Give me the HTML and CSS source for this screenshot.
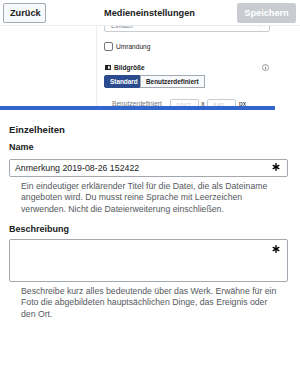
FILE: index.html
```html
<!DOCTYPE html>
<html lang="de">
<head>
    <meta charset="UTF-8">
    <meta name="viewport" content="width=device-width, initial-scale=1.0">
    <title>Medieneinstellungen</title>
    <link rel="stylesheet" href="styles.css">
</head>
<body>

<header class="topbar">
    <button class="btn back">Zurück</button>
    <div class="title">Medieneinstellungen</div>
    <button class="btn save" disabled>Speichern</button>
</header>

<section class="behind">
    <div class="side"></div>
    <div class="settings">
        <div class="dropdown">
            <span>Einfach</span>
            <svg class="caret" width="5" height="4" viewBox="0 0 5 4"><path d="M0 0 L5 0 L2.5 3.5 Z" fill="#54595d"/></svg>
        </div>
        <div class="check"><span class="box"></span>Umrandung</div>
        <div class="size-head">
            <span class="size-label">
                <svg width="6" height="5" viewBox="0 0 6 5"><rect x="0.6" y="0.6" width="4.8" height="3.8" fill="none" stroke="#202122" stroke-width="1.2"/><rect x="0.6" y="0.6" width="2.4" height="3.8" fill="#202122"/></svg>
                Bildgröße
            </span>
            <svg width="7" height="7" viewBox="0 0 14 14"><circle cx="7" cy="7" r="6" fill="none" stroke="#72777d" stroke-width="1.4"/><rect x="6.2" y="6" width="1.6" height="4.5" fill="#72777d"/><rect x="6.2" y="3.4" width="1.6" height="1.6" fill="#72777d"/></svg>
        </div>
        <div class="toggle">
            <span class="seg active">Standard</span>
            <span class="seg">Benutzerdefiniert</span>
        </div>
        <div class="custom">
            <span class="custom-label">Benutzerdefiniert</span>
            <span class="num">1047</span>
            <span class="times">x</span>
            <span class="num">640</span>
            <span class="unit">px</span>
        </div>
    </div>
</section>

<div class="progress"></div>

<main class="details">
    <h2>Einzelheiten</h2>

    <div class="label">Name</div>
    <div class="field">
        Anmerkung 2019-08-26 152422
        <svg class="req" width="8" height="8" viewBox="0 0 10 10"><g stroke="#000" stroke-width="1.8" stroke-linecap="round"><path d="M5 1 V9"/><path d="M1.5 3 L8.5 7"/><path d="M1.5 7 L8.5 3"/></g></svg>
    </div>
    <p class="help">Ein eindeutiger erklärender Titel für die Datei, die als Dateiname angeboten wird. Du musst reine Sprache mit Leerzeichen verwenden. Nicht die Dateierweiterung einschließen.</p>

    <div class="label second">Beschreibung</div>
    <div class="field area">
        <svg class="req" width="8" height="8" viewBox="0 0 10 10"><g stroke="#000" stroke-width="1.8" stroke-linecap="round"><path d="M5 1 V9"/><path d="M1.5 3 L8.5 7"/><path d="M1.5 7 L8.5 3"/></g></svg>
    </div>
    <p class="help">Beschreibe kurz alles bedeutende über das Werk. Erwähne für ein Foto die abgebildeten hauptsächlichen Dinge, das Ereignis oder den Ort.</p>
</main>

</body>
</html>
```

FILE: styles.css
```css
body {
    font-family: 'Liberation Sans', Arial, sans-serif;
    color: #202122;
    background: #fff;
    margin: 0;
    width: 300px;
    height: 369px;
    overflow: hidden;
}

/* top bar */
.topbar {
    height: 26px;
    box-sizing: border-box;
    border-bottom: 1px solid #eaecf0;
    display: grid;
    grid-template-columns: 1fr auto 1fr;
    align-items: center;
    padding: 0 4px 0 3px;
    background: #fff;
}

.btn {
    font-family: inherit;
    font-size: 9.2px;
    font-weight: bold;
    height: 20px;
    border-radius: 2px;
    padding: 0 6px;
    margin-top: 1px;
}

.back {
    justify-self: start;
    width: 43px;
    background: #f8f9fa;
    border: 1px solid #a2a9b1;
    color: #202122;
}

.save {
    justify-self: end;
    width: 59px;
    background: #c8ccd1;
    border: 1px solid #c8ccd1;
    color: #fff;
}

.title {
    font-size: 9.2px;
    font-weight: bold;
    text-align: center;
}

/* dialog behind */
.behind {
    height: 80px;
    overflow: hidden;
    display: flex;
}

.side {
    width: 96px;
    border-right: 1px solid #eaecf0;
}

.settings {
    padding-left: 7px;
    width: 166px;
    font-size: 6.6px;
}

.dropdown {
    margin-top: -8px;
    height: 14px;
    box-sizing: border-box;
    border: 1px solid #c8ccd1;
    border-radius: 2px;
    display: flex;
    align-items: center;
    justify-content: space-between;
    padding: 0 6px;
    color: #72777d;
}

.check {
    margin-top: 10px;
    height: 9px;
    display: flex;
    align-items: center;
    gap: 3px;
}

.box {
    width: 9px;
    height: 9px;
    box-sizing: border-box;
    border: 1px solid #72777d;
    border-radius: 2px;
}

.size-head {
    margin-top: 12px;
    height: 9px;
    display: flex;
    align-items: center;
    justify-content: space-between;
    padding-right: 1px;
}

.size-label {
    display: flex;
    align-items: center;
    gap: 3px;
    font-weight: bold;
    padding-left: 1px;
}

.toggle {
    margin-top: 3px;
    display: flex;
    height: 13px;
}

.seg {
    display: flex;
    align-items: center;
    padding: 0 5px;
    font-weight: bold;
    border: 1px solid #a2a9b1;
    background: #f8f9fa;
    font-size: 6.4px;
}

.seg.active {
    background: #2a4b8d;
    border-color: #2a4b8d;
    color: #fff;
    width: 36px;
    box-sizing: border-box;
    border-radius: 2px 0 0 2px;
}

.custom {
    margin-top: 11px;
    display: flex;
    align-items: flex-start;
    height: 12px;
    color: #72777d;
}

.custom-label {
    margin-left: 8px;
    margin-top: 1px;
    width: 58px;
}

.num {
    width: 29px;
    height: 14px;
    box-sizing: border-box;
    border: 1px solid #c8ccd1;
    border-radius: 2px;
    padding: 2px 5px;
    color: #c8ccd1;
}

.times {
    width: 8px;
    text-align: center;
    color: #202122;
    margin-top: 1px;
}

.unit {
    margin-left: 3px;
    margin-top: 1px;
    color: #202122;
}

.progress {
    width: 275px;
    height: 4px;
    background: #36c;
}

/* details */
.details {
    padding: 0 12px 0 9px;
}

h2 {
    font-size: 9.6px;
    line-height: 12px;
    margin: 14px 0 0;
}

.label {
    font-size: 9px;
    font-weight: bold;
    line-height: 12px;
    margin-top: 5px;
}

.label.second {
    margin-top: 8px;
}

.field {
    position: relative;
    margin-top: 6px;
    height: 18px;
    box-sizing: border-box;
    border: 1px solid #a2a9b1;
    border-radius: 2px;
    font-size: 8.8px;
    line-height: 16px;
    padding-left: 5px;
}

.field.area {
    margin-top: 4px;
    height: 43px;
}

.req {
    position: absolute;
    right: 7px;
    top: 3px;
}

.area .req {
    top: 5px;
}

.help {
    margin: 3.5px 0 0;
    padding: 0 5px 0 12px;
    font-size: 8.7px;
    line-height: 11.5px;
    color: #54595d;
}
```
